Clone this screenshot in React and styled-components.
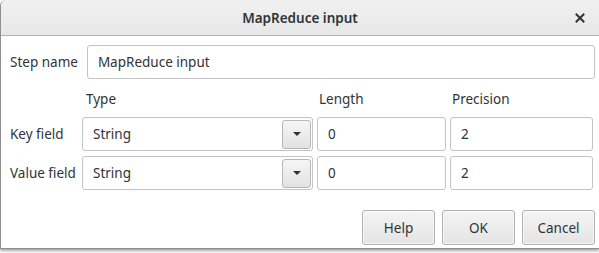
import React from 'react';
import styled, { createGlobalStyle } from 'styled-components';

const GlobalStyle = createGlobalStyle`
  html, body {
    margin: 0;
    padding: 0;
    background: #ffffff;
    overflow: hidden;
  }
  body {
    width: 599px;
    height: 253px;
    font-family: "Noto Sans", "Open Sans", "DejaVu Sans", sans-serif;
    font-size: 13.5px;
    color: #2e3436;
  }
`;

const Window = styled.div`
  width: 599px;
  height: 249px;
  box-sizing: border-box;
  display: flex;
  flex-direction: column;
  border-left: 1px solid #8f8f8f;
  border-bottom: 1px solid #8f8f8f;
  border-top-left-radius: 6px;
  background: #ffffff;
  box-shadow: 0 2px 3px rgba(0, 0, 0, 0.35);
  overflow: hidden;
`;

const TitleBar = styled.div`
  height: 36px;
  flex-shrink: 0;
  display: grid;
  grid-template-columns: 1fr auto 1fr;
  align-items: center;
  box-sizing: border-box;
  background: linear-gradient(#f0f0f0, #e8e8e8);
  border-bottom: 1px solid #b4b4b4;
  border-top-left-radius: 6px;
`;

const Title = styled.span`
  grid-column: 2;
  font-weight: 600;
  font-size: 13.5px;
  color: #2e3436;
`;

const Close = styled.span`
  justify-self: end;
  margin-right: 14px;
  display: flex;
  align-items: center;
`;

const Body = styled.div`
  width: 598px;
  box-sizing: border-box;
  padding: 9px 4px 0 9px;
  display: flex;
  flex-direction: column;
`;

const StepRow = styled.div`
  display: flex;
  align-items: center;
  gap: 9px;
  height: 34px;
`;

const Label = styled.span`
  white-space: nowrap;
`;

const Entry = styled.div`
  flex: ${({ grow }) => (grow ? 1 : 'none')};
  height: 34px;
  box-sizing: border-box;
  display: flex;
  align-items: center;
  padding-left: 10px;
  border: 1px solid #c4c4c4;
  border-radius: 3px;
  background: #ffffff;
  color: #2e3436;
  white-space: nowrap;
`;

const FieldGrid = styled.div`
  display: grid;
  grid-template-columns: 68px 231px 129px 143px;
  grid-template-rows: 33px 34px 34px;
  column-gap: 4px;
  row-gap: 5px;
  align-items: center;
`;

const Heading = styled.span`
  grid-column: ${({ col }) => col};
  padding-left: ${({ indent }) => indent}px;
  align-self: end;
  padding-bottom: 4px;
`;

const Combo = styled(Entry)`
  justify-content: space-between;
  padding-right: 1px;
`;

const DropButton = styled.div`
  width: 29px;
  height: 29px;
  box-sizing: border-box;
  display: flex;
  align-items: center;
  justify-content: center;
  border: 1px solid #b6b6b6;
  border-radius: 3px;
  background: linear-gradient(#f6f6f6, #e2e2e2);
`;

const Arrow = styled.span`
  width: 0;
  height: 0;
  border-left: 4px solid transparent;
  border-right: 4px solid transparent;
  border-top: 4px solid #2e3436;
`;

const ButtonRow = styled.div`
  display: flex;
  justify-content: flex-end;
  gap: 7px;
  margin-top: 20px;
`;

const Button = styled.button`
  flex: none;
  width: 73px;
  height: 35px;
  margin: 0;
  box-sizing: border-box;
  font: inherit;
  color: #2e3436;
  border: 1px solid #b0b0b0;
  border-radius: 3px;
  background: linear-gradient(#f4f4f4, #e4e4e4);
  box-shadow: inset 0 0 0 1px rgba(255, 255, 255, 0.6);
  padding: 0;
`;

const FIELDS = [
  { label: 'Key field', type: 'String', length: '0', precision: '2' },
  { label: 'Value field', type: 'String', length: '0', precision: '2' },
];

const App = () => (
  <>
    <GlobalStyle />
    <Window>
      <TitleBar>
        <Title>MapReduce input</Title>
        <Close>
          <svg width="10" height="10" viewBox="0 0 10 10">
            <path d="M1.5 1.5 L8.5 8.5 M8.5 1.5 L1.5 8.5" stroke="#2e3436" strokeWidth="2" strokeLinecap="square" />
          </svg>
        </Close>
      </TitleBar>
      <Body>
        <StepRow>
          <Label>Step name</Label>
          <Entry grow>MapReduce input</Entry>
        </StepRow>
        <FieldGrid>
          <Heading col={2} indent={4}>Type</Heading>
          <Heading col={3} indent={2}>Length</Heading>
          <Heading col={4} indent={2}>Precision</Heading>
          {FIELDS.map((field) => (
            <React.Fragment key={field.label}>
              <Label>{field.label}</Label>
              <Combo>
                {field.type}
                <DropButton>
                  <Arrow />
                </DropButton>
              </Combo>
              <Entry>{field.length}</Entry>
              <Entry>{field.precision}</Entry>
            </React.Fragment>
          ))}
        </FieldGrid>
        <ButtonRow>
          <Button>Help</Button>
          <Button>OK</Button>
          <Button>Cancel</Button>
        </ButtonRow>
      </Body>
    </Window>
  </>
);

export default App;
